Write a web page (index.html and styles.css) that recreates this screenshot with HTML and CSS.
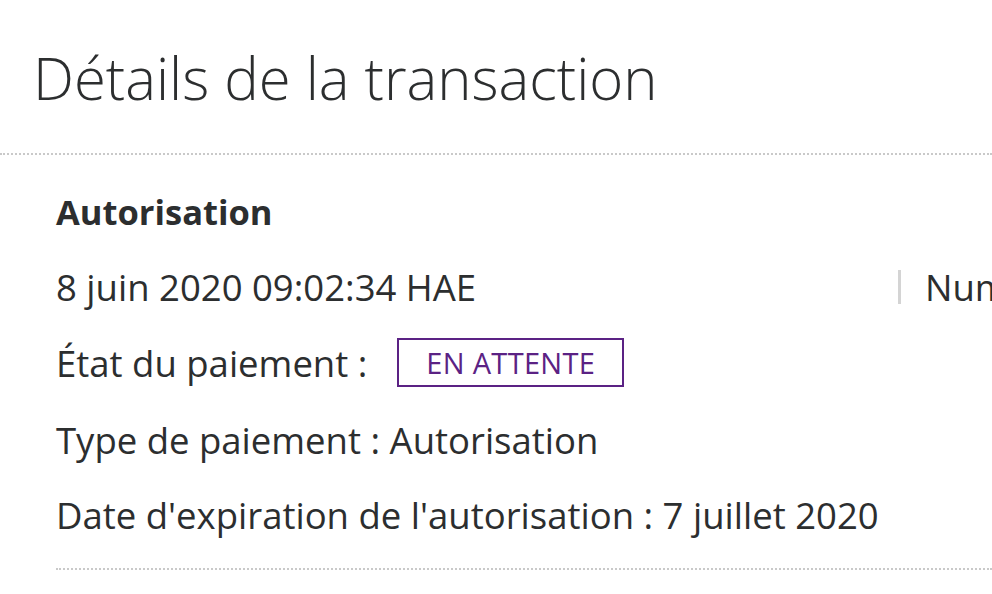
FILE: index.html
```html
<!DOCTYPE html>
<html lang="fr">
<head>
<meta charset="utf-8">
<title>Détails de la transaction</title>
<link rel="stylesheet" href="styles.css">
</head>
<body>
<div class="page">
  <header class="header">
    <h1 class="title">Détails de la transaction</h1>
  </header>
  <section class="details">
    <h2 class="type">Autorisation</h2>
    <div class="row row-date">
      <div class="col-left">8 juin 2020 09:02:34 HAE</div>
      <div class="col-right">Numéro de transaction : 4XK12345AB678901C</div>
    </div>
    <div class="row row-status">
      <span>État du paiement :</span>
      <span class="badge">EN ATTENTE</span>
    </div>
    <div class="row row-kind">Type de paiement : Autorisation</div>
    <div class="row row-exp">Date d'expiration de l'autorisation : 7 juillet 2020</div>
  </section>
</div>
</body>
</html>
```

FILE: styles.css
```css
html, body {
  margin: 0;
  padding: 0;
  background: #ffffff;
}
body {
  width: 992px;
  height: 594px;
  overflow: hidden;
  font-family: "Open Sans", "Noto Sans", sans-serif;
  color: #2c2e2f;
}
.page {
  width: 992px;
}
.header {
  padding: 40px 0 0 33px;
  height: 113px;
  border-bottom: 2px dotted #c9c9c9;
}
.title {
  margin: 0;
  font-size: 58px;
  font-weight: 300;
  line-height: 76px;
  color: #2c2e2f;
  white-space: nowrap;
}
.details {
  margin-left: 56px;
  padding-top: 35px;
  padding-bottom: 15px;
  border-bottom: 2px dotted #c9c9c9;
}
.type {
  margin: 0;
  font-size: 34.5px;
  font-weight: 700;
  line-height: 44px;
  height: 61px;
}
.row {
  font-size: 36.5px;
  line-height: 46px;
  display: flex;
  align-items: center;
  white-space: nowrap;
}
.row-date {
  height: 72px;
}
.row-status {
  height: 79px;
  gap: 30px;
}
.row-kind {
  height: 75px;
}
.row-exp {
  height: 76px;
}
.col-left {
  width: 842px;
  flex: none;
}
.col-right {
  flex: 1;
  min-width: 0;
  overflow: hidden;
  border-left: 3px solid #d4d4d4;
  padding-left: 24px;
  line-height: 34px;
}
.badge {
  border: 2px solid #5b2284;
  color: #5b2284;
  font-size: 29px;
  line-height: 45px;
  padding: 0 27px;
  letter-spacing: 0.3px;
}
```
